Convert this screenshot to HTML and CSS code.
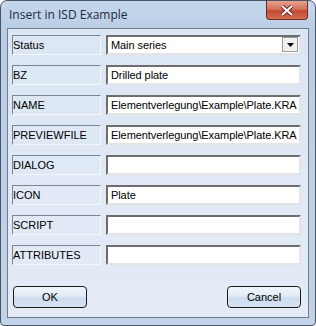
FILE: index.html
```html
<!DOCTYPE html>
<html lang="en">
<head>
    <meta charset="UTF-8">
    <title>Insert in ISD Example</title>
    <link rel="stylesheet" href="styles.css">
</head>
<body>
    <div class="window">
        <div class="titlebar">
            <span class="title">Insert in ISD Example</span>
            <div class="close">
                <svg width="14" height="11" viewBox="0 0 14 11">
                    <path d="M2 1 L12 10 M12 1 L2 10" stroke="#6b2a22" stroke-width="4"/>
                    <path d="M2 1 L12 10 M12 1 L2 10" stroke="#ffffff" stroke-width="2"/>
                </svg>
            </div>
        </div>
        <div class="client">
            <div class="rows">
                <div class="row">
                    <div class="label">Status</div>
                    <div class="select">
                        <span class="value">Main series</span>
                        <div class="arrow">
                            <svg width="7" height="4" viewBox="0 0 7 4"><path d="M0 0 H7 L3.5 4 Z" fill="#000"/></svg>
                        </div>
                    </div>
                </div>
                <div class="row">
                    <div class="label">BZ</div>
                    <div class="field">Drilled plate</div>
                </div>
                <div class="row">
                    <div class="label">NAME</div>
                    <div class="field">Elementverlegung\Example\Plate.KRA</div>
                </div>
                <div class="row">
                    <div class="label">PREVIEWFILE</div>
                    <div class="field">Elementverlegung\Example\Plate.KRA</div>
                </div>
                <div class="row">
                    <div class="label">DIALOG</div>
                    <div class="field"></div>
                </div>
                <div class="row">
                    <div class="label">ICON</div>
                    <div class="field">Plate</div>
                </div>
                <div class="row">
                    <div class="label">SCRIPT</div>
                    <div class="field"></div>
                </div>
                <div class="row">
                    <div class="label">ATTRIBUTES</div>
                    <div class="field"></div>
                </div>
            </div>
            <div class="buttons">
                <button class="btn">OK</button>
                <button class="btn">Cancel</button>
            </div>
        </div>
    </div>
</body>
</html>
```
FILE: styles.css
```css
html, body {
    margin: 0;
    padding: 0;
    background: #ffffff;
}

body {
    font-family: "Liberation Sans", Arial, sans-serif;
    font-size: 11px;
    color: #000;
}

.window {
    width: 314px;
    height: 324px;
    border: 1px solid #4a5564;
    border-radius: 7px 7px 4px 4px;
    background: linear-gradient(to bottom, #c5d7ec 0px, #b9cde6 30px, #c2d3e9 100%);
    display: flex;
    flex-direction: column;
}

.titlebar {
    height: 26px;
    display: flex;
    align-items: flex-start;
    padding-left: 8px;
}

.title {
    font-family: "Open Sans", sans-serif;
    font-size: 12px;
    color: #1e2b3a;
    margin-top: 5px;
}

.close {
    margin-left: auto;
    margin-right: 7px;
    width: 40px;
    height: 18px;
    border: 1px solid #6d2a22;
    border-top: none;
    border-radius: 0 0 4px 4px;
    background: linear-gradient(to bottom, #e7a08f 0%, #d4735e 45%, #c24a31 55%, #d36c52 100%);
    display: flex;
    align-items: center;
    justify-content: center;
}

.client {
    margin: 1px 6px 7px 6px;
    flex: 1;
    border: 1px solid #6f7c8c;
    background: linear-gradient(to bottom, #dbe6f4 0%, #e4ebf6 100%);
    padding: 6px 7px 0 4px;
    display: flex;
    flex-direction: column;
}

.rows {
    display: flex;
    flex-direction: column;
    gap: 10px;
}

.row {
    display: flex;
    gap: 5px;
    height: 20px;
}

.label {
    width: 87px;
    height: 18px;
    border: 1px solid #7c8591;
    border-right-color: #f4f7fb;
    border-bottom-color: #f4f7fb;
    line-height: 19px;
}

.field, .select {
    flex: 1;
    height: 16px;
    border: 2px solid #6d6d6d;
    border-right-color: #e4e4e4;
    border-bottom-color: #e4e4e4;
    background: #fff;
    line-height: 17px;
    padding-left: 3px;
    white-space: nowrap;
    overflow: hidden;
    letter-spacing: -0.08px;
}

.select {
    display: flex;
}

.select .value {
    flex: 1;
}

.arrow {
    width: 16px;
    height: 15px;
    margin: 0 1px 1px 0;
    border: 1px solid #9a9a9a;
    background: #f0f0f0;
    box-sizing: border-box;
    display: flex;
    align-items: center;
    justify-content: center;
}

.buttons {
    margin-top: auto;
    margin-bottom: 9px;
    display: flex;
    justify-content: space-between;
    padding-left: 1px;
}

.btn {
    width: 74px;
    height: 22px;
    border: 1px solid #1a1a1a;
    border-radius: 4px;
    background: linear-gradient(to bottom, #f2f6fb 0%, #e2ebf6 45%, #cfdcee 55%, #d6e2f2 100%);
    font-family: "Liberation Sans", Arial, sans-serif;
    font-size: 11px;
    color: #000;
    padding: 0;
}
```
